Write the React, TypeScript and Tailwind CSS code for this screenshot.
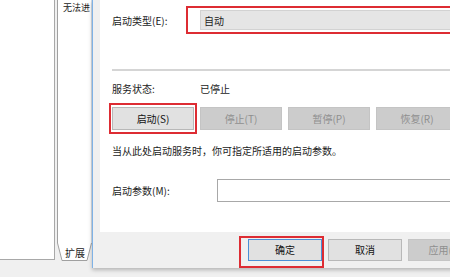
import React from "react";

const font = { fontFamily: '"Noto Sans CJK SC", "Noto Sans", sans-serif' };

function Btn({ label, disabled, primary, w = "w-[82px]", h = "h-[23px]" }: { label: string; disabled?: boolean; primary?: boolean; w?: string; h?: string }) {
  const cls = disabled
    ? "bg-[#cccccc] border-[#c4c4c4] text-[#8f8f8f]"
    : primary
    ? "bg-[#e1e1e1] border-[#4a8fd6] text-[#111]"
    : "bg-[#e1e1e1] border-[#b8b8b8] text-[#111]";
  return (
    <div className={`${w} ${h} shrink-0 border flex items-center justify-center text-[10px] leading-none whitespace-nowrap ${cls}`}>
      {label}
    </div>
  );
}

export default function App() {
  return (
    <div className="w-[450px] h-[277px] bg-[#f0f0f0] overflow-hidden flex text-[#1b1b1b]" style={font}>
      {/* left white area */}
      <div className="w-[55px] h-[260px] shrink-0 bg-white border-r border-b border-[#a8a8a8]" />
      <div className="w-[2px] shrink-0" />
      {/* middle panel */}
      <div className="w-[35px] shrink-0 flex flex-col">
        <div className="h-[243px] bg-white border-l border-[#a0a0a0] border-r border-r-[#d6dde5] overflow-hidden whitespace-nowrap pl-[5px] pt-[1px] text-[9px] leading-[14px]">
          无法进
        </div>
        <div className="relative h-[19px] w-[35px] flex items-center justify-center text-[10px] leading-none">
          <svg className="absolute inset-0" width="35" height="19" viewBox="0 0 35 19">
            <path d="M0.5 0 L5 17.5 L30 17.5 L34.5 0" fill="#ffffff" stroke="#a0a0a0" strokeWidth="1" />
          </svg>
          <span className="relative pl-[1px]">扩展</span>
        </div>
      </div>
      {/* dialog */}
      <div className="relative w-[390px] h-[268px] shrink-0 bg-[#f0f0f0] border-l border-[#7fb2e6] shadow-[0_2px_4px_rgba(0,0,0,0.25)] flex flex-col pl-[7px]">
        <div className="relative h-[232px] bg-white flex flex-col pl-[12px]">
          <div className="mt-[10px] h-[20px] flex items-center text-[10px]">
            <div className="w-[88px] shrink-0">启动类型(E):</div>
            <div className="flex-1 h-[20px] bg-[#e5e5e5] border border-[#d2d2d2] flex items-center pl-[3px]">自动</div>
          </div>
          <div className="mt-[39px] h-[2px] bg-[#d5d5d5]" />
          <div className="mt-[10px] h-[14px] flex items-center text-[10px]">
            <div className="w-[88px] shrink-0">服务状态:</div>
            <div>已停止</div>
          </div>
          <div className="mt-[12px] flex gap-[6px]">
            <Btn label="启动(S)" />
            <Btn label="停止(T)" disabled />
            <Btn label="暂停(P)" disabled />
            <Btn label="恢复(R)" disabled />
          </div>
          <div className="mt-[13px] h-[14px] flex items-center text-[10px] whitespace-nowrap">
            当从此处启动服务时，你可指定所适用的启动参数。
          </div>
          <div className="mt-[22px] h-[23px] flex items-center text-[10px]">
            <div className="w-[105px] shrink-0">启动参数(M):</div>
            <div className="flex-1 h-[23px] bg-white border border-[#a8a8a8]" />
          </div>
          <div className="absolute left-[86px] top-[6px] w-[320px] h-[28px] border-2 border-[#dd2c33]" />
          <div className="absolute left-[9px] top-[103px] w-[88px] h-[31px] border-2 border-[#dd2c33]" />
        </div>
        <div className="flex pt-[7px] pl-[148px] gap-[6px]">
          <Btn label="确定" primary w="w-[74px]" h="h-[22px]" />
          <Btn label="取消" w="w-[74px]" h="h-[22px]" />
          <Btn label="应用(A)" disabled w="w-[74px]" h="h-[22px]" />
        </div>
        <div className="absolute left-[146px] top-[236px] w-[85px] h-[32px] border-2 border-[#dd2c33]" />
      </div>
    </div>
  );
}
